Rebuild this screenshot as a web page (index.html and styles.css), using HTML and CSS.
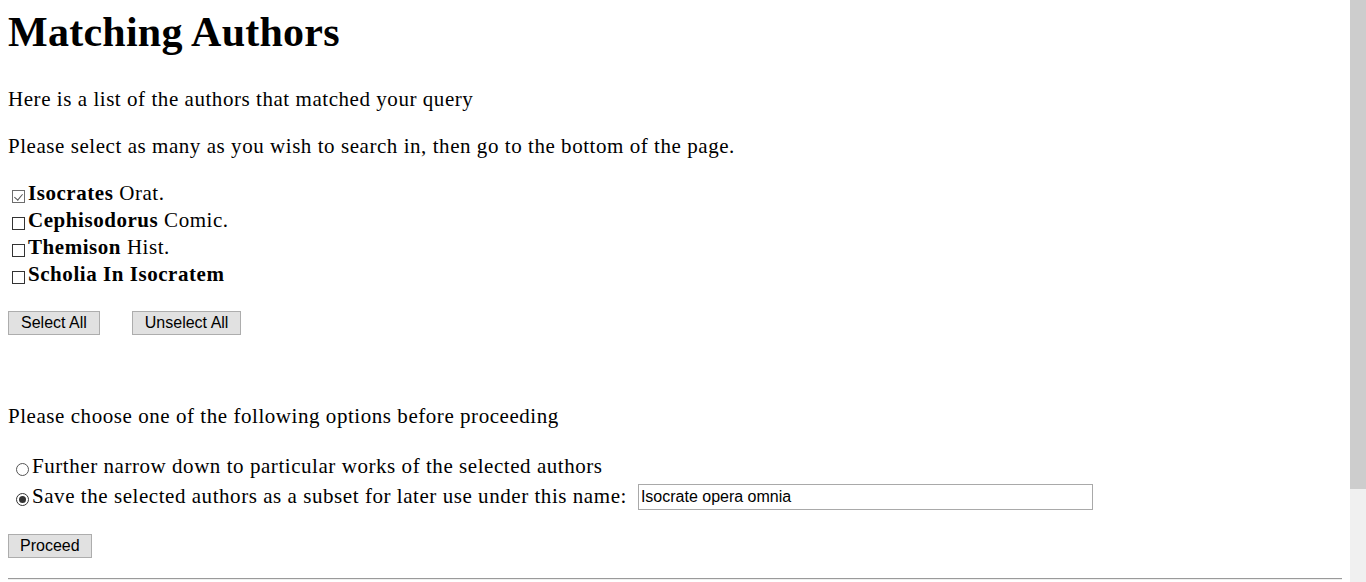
FILE: index.html
```html
<!DOCTYPE html>
<html lang="en">
<head>
    <meta charset="UTF-8">
    <title>Matching Authors</title>
    <link rel="stylesheet" href="styles.css">
</head>
<body>
    <h1>Matching Authors</h1>
    <p>Here is a list of the authors that matched your query</p>
    <p>Please select as many as you wish to search in, then go to the bottom of the page.</p>

    <form id="author-form">
        <div class="authors">
            <div class="author"><input type="checkbox" id="au-1" checked><label for="au-1"><b>Isocrates</b> Orat.</label></div>
            <div class="author"><input type="checkbox" id="au-2"><label for="au-2"><b>Cephisodorus</b> Comic.</label></div>
            <div class="author"><input type="checkbox" id="au-3"><label for="au-3"><b>Themison</b> Hist.</label></div>
            <div class="author"><input type="checkbox" id="au-4"><label for="au-4"><b>Scholia In Isocratem</b></label></div>
        </div>

        <div class="button-row">
            <button type="button" onclick="setAll(true)">Select All</button>
            <button type="button" onclick="setAll(false)">Unselect All</button>
        </div>

        <p class="choose">Please choose one of the following options before proceeding</p>

        <div class="options">
            <div class="option"><input type="radio" name="next" id="opt-works"><label for="opt-works">Further narrow down to particular works of the selected authors</label></div>
            <div class="option"><input type="radio" name="next" id="opt-subset" checked><label for="opt-subset">Save the selected authors as a subset for later use under this name:</label><input type="text" class="subset-name" value="Isocrate opera omnia" aria-label="Subset name"></div>
        </div>

        <button type="submit" class="proceed">Proceed</button>
    </form>
    <hr>
    <div class="page-end"></div>

    <!-- window scrollbar -->
    <div class="scrollbar"><div class="scrollbar-thumb"></div></div>

    <script>
        function setAll(state) {
            document.querySelectorAll('.author input').forEach(box => box.checked = state);
        }
    </script>
</body>
</html>
```

FILE: styles.css
```css
body {
    font-family: 'Liberation Serif', 'Times New Roman', serif;
    font-size: 21px;
    letter-spacing: 0.55px;
    line-height: 27px;
    margin: 8px 24px 8px 8px;
    color: #000;
    background-color: #fff;
}
h1 {
    font-size: 42px;
    line-height: 46px;
    letter-spacing: 0.25px;
    margin: 1px 0 31px;
}
p {
    margin: 20px 0;
}
.authors {
    margin-top: 20px;
}
.author input {
    appearance: none;
    position: relative;
    width: 13px;
    height: 13px;
    margin: 0 3px 0 4px;
    vertical-align: -3px;
    border: 1px solid #333;
    background-color: #fff;
}
.author input:checked {
    border-color: #6d6d6d;
}
.author input:checked::after {
    content: '';
    position: absolute;
    left: 3px;
    top: 1px;
    width: 4px;
    height: 7px;
    border-right: 1px solid #555;
    border-bottom: 1px solid #555;
    transform: rotate(40deg);
}
.button-row {
    display: flex;
    gap: 32px;
    margin-top: 23px;
}
button {
    font-family: 'Liberation Sans', Arial, sans-serif;
    font-size: 16px;
    letter-spacing: 0;
    height: 24px;
    padding: 0 12px;
    color: #000;
    background-color: #e1e1e1;
    border: 1px solid #adadad;
    border-radius: 0;
}
.choose {
    margin-top: 68px;
    margin-bottom: 21px;
}
.options {
    padding-left: 3px;
}
.option {
    line-height: 30px;
}
.option input[type="radio"] {
    appearance: none;
    position: relative;
    width: 13px;
    height: 13px;
    margin: 0 3px 0 5px;
    vertical-align: -3px;
    border: 1px solid #555;
    border-radius: 50%;
    background-color: #fff;
}
.option input[type="radio"]:checked {
    border-color: #333;
}
.option input[type="radio"]:checked::after {
    content: '';
    position: absolute;
    left: 2px;
    top: 2px;
    width: 7px;
    height: 7px;
    border-radius: 50%;
    background-color: #333;
}
.subset-name {
    box-sizing: border-box;
    width: 455px;
    height: 26px;
    margin-left: 11px;
    padding: 0 2px;
    vertical-align: 1px;
    font-family: 'Liberation Sans', Arial, sans-serif;
    font-size: 16px;
    letter-spacing: 0;
    color: #000;
    border: 1px solid #a9a9a9;
}
.proceed {
    display: block;
    margin-top: 23px;
    padding: 0 11px;
}
hr {
    margin: 20px 0 0;
    height: 0;
    border: none;
    border-top: 1px solid #9a9a9a;
    border-bottom: 1px solid #eeeeee;
}
.page-end {
    height: 105px;
}
.scrollbar {
    position: fixed;
    top: 0;
    right: 0;
    width: 16px;
    height: 100%;
    background-color: #f0f0f0;
}
.scrollbar-thumb {
    height: 489px;
    background-color: #cdcdcd;
}
```
